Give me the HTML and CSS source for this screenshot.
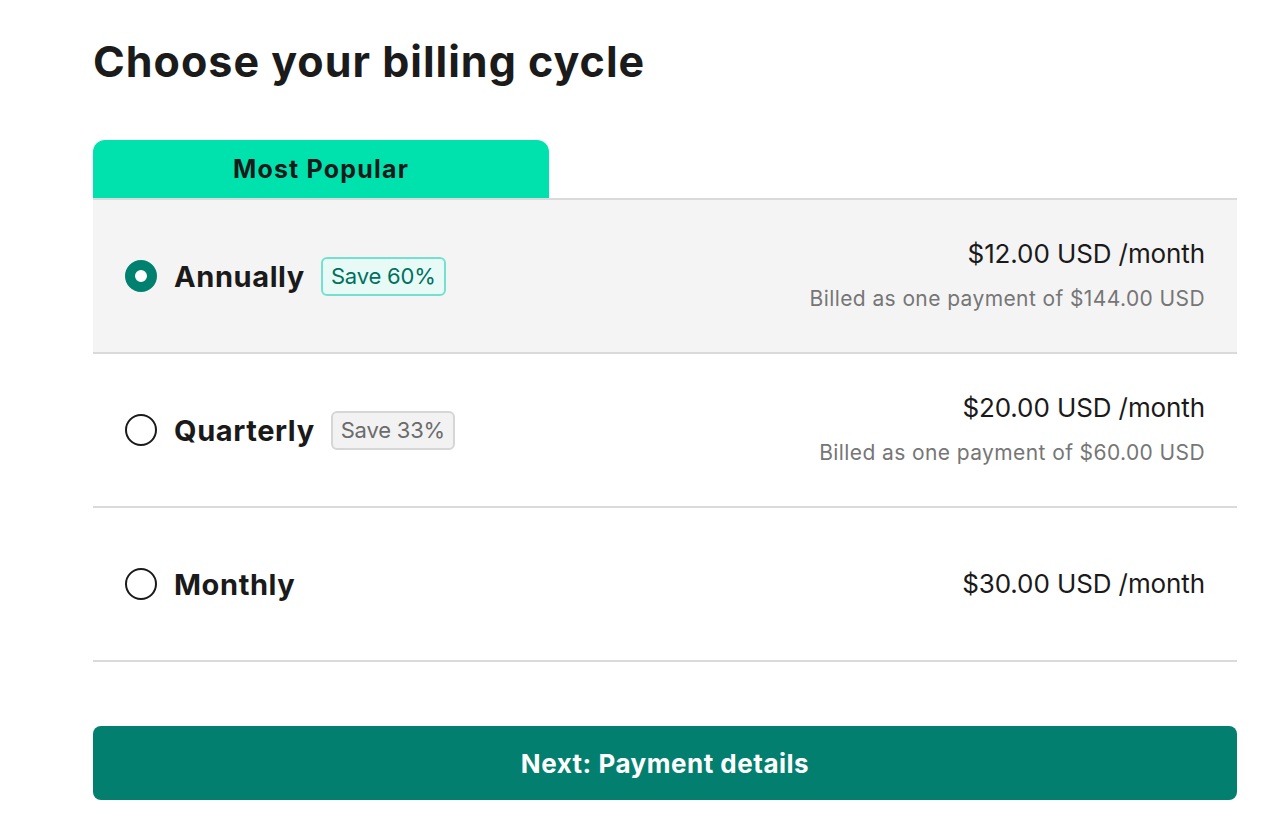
FILE: index.html
```html
<!DOCTYPE html>
<html>
<head>
<meta charset="utf-8">
<link rel="stylesheet" href="styles.css">
</head>
<body>
<main class="page">
  <h1 class="title">Choose your billing cycle</h1>
  <div class="tab">Most Popular</div>
  <div class="options">
    <div class="row selected">
      <div class="left">
        <span class="radio on"></span>
        <span class="label">Annually</span>
        <span class="badge teal">Save 60%</span>
      </div>
      <div class="right">
        <div class="price">$12.00 USD /month</div>
        <div class="sub">Billed as one payment of $144.00 USD</div>
      </div>
    </div>
    <div class="row">
      <div class="left">
        <span class="radio"></span>
        <span class="label">Quarterly</span>
        <span class="badge gray">Save 33%</span>
      </div>
      <div class="right">
        <div class="price">$20.00 USD /month</div>
        <div class="sub">Billed as one payment of $60.00 USD</div>
      </div>
    </div>
    <div class="row">
      <div class="left">
        <span class="radio"></span>
        <span class="label">Monthly</span>
      </div>
      <div class="right">
        <div class="price">$30.00 USD /month</div>
      </div>
    </div>
  </div>
  <button class="next">Next: Payment details</button>
</main>
</body>
</html>
```
FILE: styles.css
```css
* { box-sizing: border-box; }
body {
  margin: 0;
  background: #fff;
  font-family: Inter, "Noto Sans", sans-serif;
  color: #1a1a1a;
}
.page {
  width: 1144px;
  margin-left: 93px;
  padding-top: 32px;
}
.title {
  margin: 0;
  font-size: 43px;
  font-weight: 700;
  line-height: 58px;
  letter-spacing: 1px;
  color: #1b1b1b;
}
.tab {
  margin-top: 50px;
  width: 456px;
  height: 58px;
  background: #00e2ad;
  border-radius: 12px 12px 0 0;
  display: flex;
  align-items: center;
  justify-content: center;
  font-size: 25px;
  font-weight: 700;
  letter-spacing: 1.2px;
  color: #1a1a1a;
}
.options {
  border-top: 2px solid #dadada;
}
.row {
  height: 154px;
  border-bottom: 2px solid #dadada;
  display: flex;
  align-items: center;
  justify-content: space-between;
  padding: 0 32px;
}
.row.selected { background: #f4f4f4; }
.left {
  display: flex;
  align-items: center;
}
.radio {
  width: 32px;
  height: 32px;
  border-radius: 50%;
  border: 2px solid #1a1a1a;
  background: #fff;
  display: inline-block;
  margin-right: 17px;
}
.radio.on {
  border: 10px solid #00806f;
  background: #fff;
}
.label {
  font-size: 29px;
  font-weight: 700;
  letter-spacing: 0.6px;
  margin-right: 16px;
}
.badge {
  height: 39px;
  padding: 0 8px;
  border-radius: 6px;
  font-size: 22px;
  letter-spacing: -0.2px;
  display: inline-flex;
  align-items: center;
}
.badge.teal {
  border: 2px solid #74e0cf;
  background: #e8faf6;
  color: #00705f;
}
.badge.gray {
  border: 2px solid #d6d6d6;
  background: #f2f2f2;
  color: #6b6b6b;
}
.right {
  text-align: right;
  display: flex;
  flex-direction: column;
  gap: 16px;
}
.price {
  font-size: 26px;
  line-height: 30px;
  letter-spacing: -0.1px;
  color: #1a1a1a;
}
.sub {
  font-size: 21px;
  line-height: 28px;
  letter-spacing: 0.4px;
  color: #767676;
}
.next {
  display: flex;
  align-items: center;
  justify-content: center;
  width: 100%;
  height: 74px;
  margin-top: 64px;
  border: none;
  border-radius: 8px;
  background: #027f6f;
  color: #fff;
  font-family: Inter, "Noto Sans", sans-serif;
  font-size: 26px;
  font-weight: 700;
  letter-spacing: 0.5px;
}
```
